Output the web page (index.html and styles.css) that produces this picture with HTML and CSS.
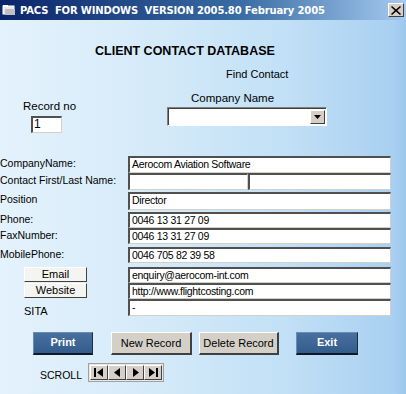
FILE: index.html
```html
<!DOCTYPE html>
<html lang="en">
<head>
  <meta charset="UTF-8">
  <title>PACS Client Contact Database</title>
  <link rel="stylesheet" href="styles.css">
</head>
<body>
  <div class="window">
    <div class="titlebar">
      <svg class="app-icon" width="14" height="12" viewBox="0 0 14 12">
        <rect x="1" y="2" width="11" height="8" fill="#e8e8e8" stroke="#ffffff" stroke-width="1"/>
        <rect x="1" y="1" width="5" height="2" fill="#ffffff"/>
        <rect x="3" y="5" width="10" height="6" fill="#c0c0c0"/>
      </svg>
      <span class="title-text">PACS&nbsp; FOR WINDOWS&nbsp; VERSION 2005.80 February 2005</span>
      <div class="close-btn">
        <svg width="10" height="9" viewBox="0 0 10 9">
          <path d="M1 0 L5 3.5 L9 0 L10 1 L6.2 4.5 L10 8 L9 9 L5 5.5 L1 9 L0 8 L3.8 4.5 L0 1 Z" fill="#000"/>
        </svg>
      </div>
    </div>

    <div class="content">
      <h1 class="heading">CLIENT CONTACT DATABASE</h1>
      <div class="find">Find Contact</div>

      <div class="search">
        <div class="record">
          <div class="record-label">Record no</div>
          <div class="record-input">1</div>
        </div>
        <div class="company-search">
          <div class="company-label">Company Name</div>
          <div class="combo">
            <div class="combo-text"></div>
            <div class="combo-btn">
              <svg width="7" height="4" viewBox="0 0 7 4"><path d="M0 0 H7 L3.5 4 Z" fill="#000"/></svg>
            </div>
          </div>
        </div>
      </div>

      <div class="form">
        <div class="row">
          <div class="label">CompanyName:</div>
          <div class="field">Aerocom Aviation Software</div>
        </div>
        <div class="row">
          <div class="label">Contact First/Last Name:</div>
          <div class="field first-name"></div>
          <div class="field last-name"></div>
        </div>
        <div class="row gap2 tall">
          <div class="label">Position</div>
          <div class="field">Director</div>
        </div>
        <div class="row gap2 short">
          <div class="label">Phone:</div>
          <div class="field">0046 13 31 27 09</div>
        </div>
        <div class="row short">
          <div class="label">FaxNumber:</div>
          <div class="field">0046 13 31 27 09</div>
        </div>
        <div class="row gap3 short">
          <div class="label">MobilePhone:</div>
          <div class="field">0046 705 82 39 58</div>
        </div>
        <div class="row gap4 short">
          <div class="label"><span class="link-btn">Email</span></div>
          <div class="field">enquiry@aerocom-int.com</div>
        </div>
        <div class="row short">
          <div class="label"><span class="link-btn">Website</span></div>
          <div class="field">http://www.flightcosting.com</div>
        </div>
        <div class="row">
          <div class="label sita">SITA</div>
          <div class="field">-</div>
        </div>
      </div>

      <div class="actions">
        <button class="btn blue print">Print</button>
        <button class="btn grey new">New Record</button>
        <button class="btn grey delete">Delete Record</button>
        <button class="btn blue exit">Exit</button>
      </div>

      <div class="scroll">
        <span class="scroll-label">SCROLL</span>
        <div class="nav">
          <div class="nav-btn">
            <svg width="10" height="9" viewBox="0 0 10 9"><rect x="0" y="0" width="2" height="9" fill="#000"/><path d="M9 0 V9 L3 4.5 Z" fill="#000"/></svg>
          </div>
          <div class="nav-btn">
            <svg width="7" height="9" viewBox="0 0 7 9"><path d="M6 0 V9 L0 4.5 Z" fill="#000"/></svg>
          </div>
          <div class="nav-btn">
            <svg width="7" height="9" viewBox="0 0 7 9"><path d="M1 0 V9 L7 4.5 Z" fill="#000"/></svg>
          </div>
          <div class="nav-btn">
            <svg width="10" height="9" viewBox="0 0 10 9"><path d="M1 0 V9 L7 4.5 Z" fill="#000"/><rect x="8" y="0" width="2" height="9" fill="#000"/></svg>
          </div>
        </div>
      </div>
    </div>
  </div>
</body>
</html>
```

FILE: styles.css
```css
body {
  margin: 0;
  padding: 0;
  font-family: 'Liberation Sans', Arial, sans-serif;
  font-size: 10.5px;
  color: #000;
}

.window {
  width: 406px;
  height: 394px;
  overflow: hidden;
  background: linear-gradient(90deg, #e4f2fc 0%, #d6ebf9 35%, #c2e0f6 70%, #a9d0f1 97%, #9cc6ec 100%);
}

/* Title bar */
.titlebar {
  height: 20px;
  display: flex;
  align-items: center;
  background: linear-gradient(90deg, #0a246a 0%, #3a6ea5 60%, #a6caf0 100%);
  color: #fff;
}

.app-icon {
  margin-left: 2px;
  margin-right: 4px;
}

.title-text {
  font-family: 'DejaVu Sans', Verdana, sans-serif;
  font-weight: bold;
  font-size: 10px;
  letter-spacing: -0.15px;
  white-space: nowrap;
}

.close-btn {
  margin-left: auto;
  margin-right: 2px;
  width: 14px;
  height: 12px;
  background: #d4d0c8;
  border-top: 1px solid #fff;
  border-left: 1px solid #fff;
  border-right: 1px solid #404040;
  border-bottom: 1px solid #404040;
  display: flex;
  align-items: center;
  justify-content: center;
}

/* Header */
.content {
  padding-top: 24px;
}

.heading {
  margin: 0 0 0 95px;
  font-size: 12.5px;
  font-weight: bold;
  line-height: 14px;
}

.find {
  margin: 10px 0 0 226px;
  line-height: 12px;
  font-size: 11px;
}

.search {
  display: flex;
  margin-top: 12px;
}

.record {
  width: 167px;
  flex: none;
  padding-left: 23px;
  padding-top: 8px;
  box-sizing: border-box;
}

.record-label {
  line-height: 12px;
  font-size: 11.5px;
}

.record-input {
  width: 31px;
  height: 17px;
  margin: 4px 0 0 8px;
  box-sizing: border-box;
  background: #fff;
  border-top: 2px solid #505050;
  border-left: 2px solid #505050;
  border-right: 1px solid #d4d0c8;
  border-bottom: 1px solid #d4d0c8;
  padding-left: 1px;
  font-size: 12px;
  line-height: 13px;
}

.company-search {
  width: 160px;
}

.company-label {
  margin-left: 24px;
  line-height: 12px;
  font-size: 11.5px;
}

.combo {
  display: flex;
  width: 160px;
  height: 19px;
  margin-top: 3px;
  box-sizing: border-box;
  background: #fff;
  border-top: 1px solid #808080;
  border-left: 1px solid #808080;
  border-right: 1px solid #fff;
  border-bottom: 1px solid #fff;
  box-shadow: inset 1px 1px 0 #404040;
  padding: 2px 1px 1px 2px;
}

.combo-text {
  flex: 1;
}

.combo-btn {
  width: 15px;
  background: #d4d0c8;
  border-top: 1px solid #fff;
  border-left: 1px solid #fff;
  border-right: 1px solid #404040;
  border-bottom: 1px solid #404040;
  box-sizing: border-box;
  display: flex;
  align-items: center;
  justify-content: center;
}

/* Form */
.form {
  margin-top: 23px;
}

.row {
  display: flex;
  height: 17px;
}

.row.tall {
  height: 18px;
}

.row.short {
  height: 16px;
}

.gap2 { margin-top: 2px; }
.gap3 { margin-top: 3px; }
.gap4 { margin-top: 4px; }

.label {
  width: 128px;
  flex: none;
  line-height: 12px;
  padding-top: 1px;
  white-space: nowrap;
}

.field {
  width: 263px;
  box-sizing: border-box;
  background: #fff;
  border-top: 2px solid #505050;
  border-left: 2px solid #505050;
  border-right: 1px solid #d4d0c8;
  border-bottom: 1px solid #d4d0c8;
  padding-left: 2px;
  line-height: 12px;
  font-size: 10.5px;
  letter-spacing: -0.3px;
  white-space: nowrap;
  overflow: hidden;
}

.field.first-name {
  width: 120px;
}

.field.last-name {
  width: 143px;
}

.link-btn {
  display: block;
  width: 63px;
  height: 15px;
  margin-left: 24px;
  margin-top: -1px;
  box-sizing: border-box;
  background: #f4f4f0;
  border-top: 1px solid #fff;
  border-left: 1px solid #fff;
  border-right: 1px solid #404040;
  border-bottom: 1px solid #404040;
  text-align: center;
  line-height: 13px;
  font-size: 11px;
}

.sita {
  padding-left: 24px;
  padding-top: 6px;
  box-sizing: border-box;
  font-size: 11px;
}

/* Action buttons */
.actions {
  display: flex;
  margin-top: 16px;
  padding-left: 33px;
}

.btn {
  height: 23px;
  padding: 0;
  box-sizing: border-box;
  font-family: 'Liberation Sans', Arial, sans-serif;
  font-size: 11px;
  cursor: pointer;
}

.btn.blue {
  background: linear-gradient(180deg, #48709f 0%, #335c8c 100%);
  color: #fff;
  font-weight: bold;
  border: 1px solid #6a8cb4;
  border-bottom: 2px solid #101828;
  border-right: 1px solid #1c2c44;
  padding-bottom: 3px;
}

.btn.grey {
  background: #d4d0c8;
  color: #000;
  border-top: 1px solid #fff;
  border-left: 1px solid #fff;
  border-right: 2px solid #404040;
  border-bottom: 2px solid #404040;
}

.print { width: 60px; }
.new { width: 81px; margin-left: 18px; }
.delete { width: 80px; margin-left: 7px; }
.exit { width: 62px; margin-left: 17px; }

/* Scroll navigator */
.scroll {
  display: flex;
  align-items: center;
  margin-top: 8px;
  padding-left: 40px;
}

.scroll-label {
  font-size: 10.5px;
  margin-top: 4px;
}

.nav {
  display: flex;
  margin-left: 6px;
  padding: 1px;
  background: #e8e8e8;
  border: 1px solid #a0a0a0;
}

.nav-btn {
  width: 18px;
  height: 15px;
  box-sizing: border-box;
  background: #d4d0c8;
  border-top: 1px solid #fff;
  border-left: 1px solid #fff;
  border-right: 1px solid #404040;
  border-bottom: 1px solid #404040;
  display: flex;
  align-items: center;
  justify-content: center;
}
```
